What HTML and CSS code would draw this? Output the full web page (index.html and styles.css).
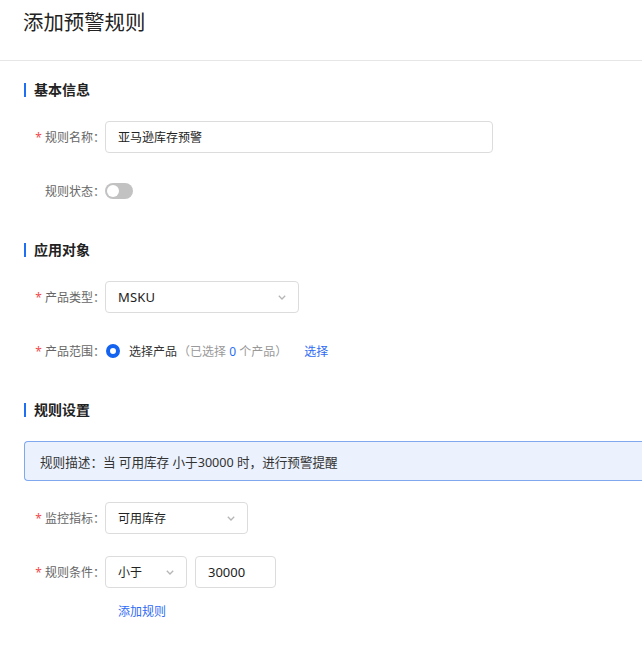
FILE: index.html
```html
<!DOCTYPE html>
<html lang="zh-CN">
<head>
<meta charset="utf-8">
<title>添加预警规则</title>
<link rel="stylesheet" href="styles.css">
</head>
<body>
<div class="page">
  <header class="header"><h1 class="title">添加预警规则</h1></header>
  <main class="main">
    <section class="section first">
      <h2 class="sec-title">基本信息</h2>
      <div class="row">
        <label class="label"><span class="req">*</span>规则名称：</label>
        <div class="input w-388">亚马逊库存预警</div>
      </div>
      <div class="row">
        <label class="label">规则状态：</label>
        <span class="switch"><span class="knob"></span></span>
      </div>
    </section>

    <section class="section">
      <h2 class="sec-title">应用对象</h2>
      <div class="row">
        <label class="label"><span class="req">*</span>产品类型：</label>
        <div class="select w-194"><span class="val val-latin">MSKU</span><svg class="chev" width="8" height="5" viewBox="0 0 8 5"><path d="M0.8 0.8 L4 4 L7.2 0.8" fill="none" stroke="#b5b5b5" stroke-width="1.3"/></svg></div>
      </div>
      <div class="row">
        <label class="label"><span class="req">*</span>产品范围：</label>
        <span class="radio"></span>
        <span class="radio-text">选择产品</span>
        <span class="muted">（已选择 <span class="num">0</span> 个产品）</span>
        <a class="link pick">选择</a>
      </div>
    </section>

    <section class="section">
      <h2 class="sec-title">规则设置</h2>
      <div class="alert">规则描述：当 可用库存 小于30000 时，进行预警提醒</div>
      <div class="row">
        <label class="label"><span class="req">*</span>监控指标：</label>
        <div class="select w-143"><span class="val">可用库存</span><svg class="chev" width="8" height="5" viewBox="0 0 8 5"><path d="M0.8 0.8 L4 4 L7.2 0.8" fill="none" stroke="#b5b5b5" stroke-width="1.3"/></svg></div>
      </div>
      <div class="row tight">
        <label class="label"><span class="req">*</span>规则条件：</label>
        <div class="select w-82"><span class="val">小于</span><svg class="chev" width="8" height="5" viewBox="0 0 8 5"><path d="M0.8 0.8 L4 4 L7.2 0.8" fill="none" stroke="#b5b5b5" stroke-width="1.3"/></svg></div>
        <div class="input w-81 gap-left">30000</div>
      </div>
      <div class="add-row"><a class="link">添加规则</a></div>
    </section>
  </main>
</div>
</body>
</html>
```

FILE: styles.css
```css
* { box-sizing: border-box; }
html, body { margin: 0; padding: 0; }
body {
  background: #fff;
  font-family: "Noto Sans", "Noto Sans CJK SC", sans-serif;
  color: #333;
  overflow-x: hidden;
}
.page { width: 642px; }
.header {
  height: 61px;
  border-bottom: 1px solid #e6e6e6;
  padding: 8px 0 0 23px;
}
.title {
  margin: 0;
  font-size: 20.4px;
  font-weight: 400;
  color: #222;
  line-height: 28px;
}
.main { padding: 0 0 0 24px; }
.section { margin-top: 33px; }
.section.first { margin-top: 19px; }
.sec-title {
  margin: 0 0 21px 0;
  height: 20px;
  line-height: 20px;
  font-size: 14px;
  font-weight: 700;
  color: #222;
  display: flex;
  align-items: center;
}
.sec-title::before {
  content: "";
  width: 2px;
  height: 14px;
  background: #1f6ff2;
  margin-right: 8px;
}
.row {
  display: flex;
  align-items: center;
  height: 32px;
  margin-bottom: 22px;
  font-size: 12px;
}
.section .row:last-child { margin-bottom: 0; }
.row.tight { margin-bottom: 14px; }
.label {
  width: 81px;
  text-align: right;
  padding-right: 0;
  color: #666;
  font-size: 12px;
  white-space: nowrap;
}
.req { color: #f04c4c; margin-right: 3px; }
.input, .select {
  height: 32px;
  border: 1px solid #dcdcdc;
  border-radius: 4px;
  display: flex;
  align-items: center;
  padding-left: 12px;
  font-size: 12px;
  color: #222;
}
.select { justify-content: space-between; padding-right: 12px; }
.val-latin { font-size: 13px; letter-spacing: 0.2px; }
.chev { display: block; }
.w-388 { width: 388px; }
.w-194 { width: 194px; }
.w-143 { width: 143px; }
.w-82 { width: 82px; }
.w-81 { width: 81px; }
.gap-left { margin-left: 8px; font-size: 13px; }
.switch {
  width: 28px;
  height: 16px;
  border-radius: 8px;
  background: #c2c2c2;
  display: flex;
  align-items: center;
  padding-left: 2px;
}
.knob {
  width: 12px;
  height: 12px;
  border-radius: 50%;
  background: #fff;
}
.radio {
  width: 14px;
  height: 14px;
  border-radius: 50%;
  background: #fff;
  border: 4px solid #1463f0;
  margin-left: 1px;
  margin-right: 9px;
}
.radio-text { color: #333; }
.muted { color: #999; margin-left: 1px; }
.num { color: #1f6ff2; }
.link { color: #2f6bf5; cursor: pointer; }
.pick { margin-left: 17px; }
.alert {
  height: 40px;
  border: 1px solid #7fa8ef;
  border-right: none;
  border-radius: 4px 0 0 4px;
  background: #ebf2fe;
  display: flex;
  align-items: center;
  padding-left: 15px;
  font-size: 12.6px;
  color: #333;
  margin-bottom: 21px;
}
.add-row {
  padding-left: 94px;
  font-size: 12px;
  height: 20px;
  line-height: 20px;
}
```
